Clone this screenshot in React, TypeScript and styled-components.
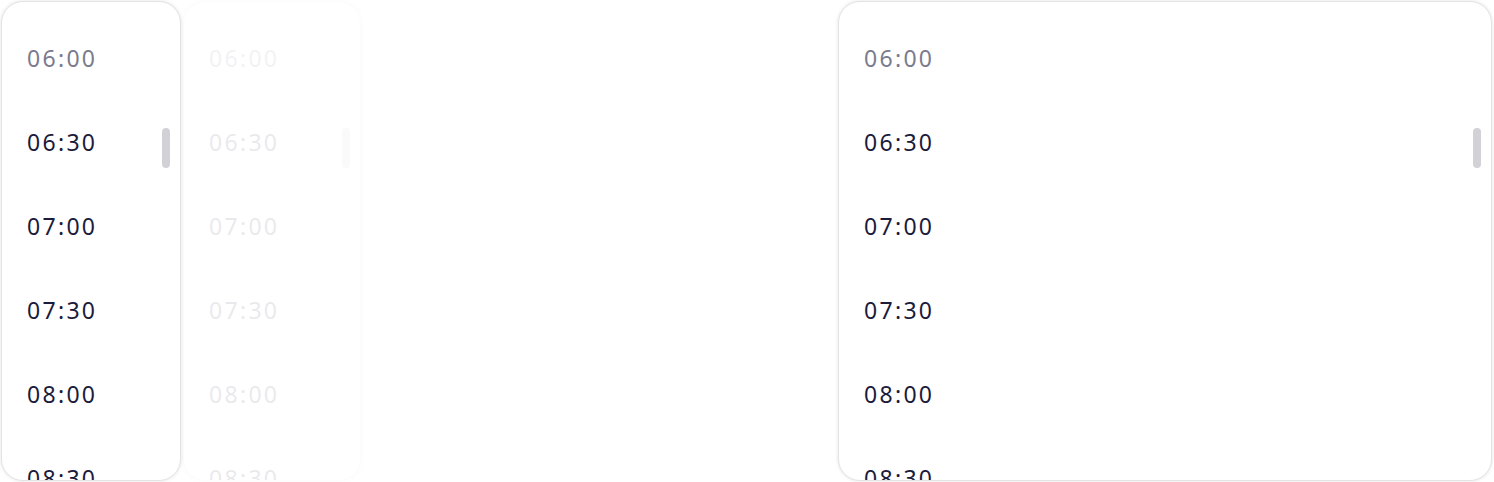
import React from "react";
import styled, { createGlobalStyle } from "styled-components";

const Global = createGlobalStyle`
  html, body { margin: 0; padding: 0; background: #ffffff; }
  body { font-family: "Noto Sans", "Liberation Sans", sans-serif; overflow: hidden; }
`;

const Page = styled.div`
  display: flex;
  align-items: flex-start;
  width: 1494px;
  height: 482px;
  padding: 1px 1px 0 1px;
  box-sizing: border-box;
  overflow: hidden;
`;

const Card = styled.div<{ $w: number; $faded?: boolean }>`
  position: relative;
  flex: none;
  width: ${(p) => p.$w}px;
  height: 480px;
  box-sizing: border-box;
  background: #ffffff;
  border: 1.5px solid #e4e4e7;
  border-radius: 22px;
  box-shadow: 0 0 3px 1px rgba(0, 0, 0, 0.07);
  overflow: hidden;
  opacity: ${(p) => (p.$faded ? 0.09 : 1)};
`;

const Spacer = styled.div<{ $w: number }>`
  flex: none;
  width: ${(p) => p.$w}px;
`;

const List = styled.ul`
  list-style: none;
  margin: 0;
  padding: 14px 0 0 25px;
  display: flex;
  flex-direction: column;
`;

const Option = styled.li<{ $muted?: boolean }>`
  height: 84px;
  display: flex;
  align-items: center;
  font-size: 23px;
  letter-spacing: 2.3px;
  color: ${(p) => (p.$muted ? "#7b7b8e" : "#1b1b3b")};
`;

const Thumb = styled.div`
  position: absolute;
  top: 126px;
  right: 10px;
  width: 8px;
  height: 40px;
  border-radius: 4px;
  background: #d1d1d6;
`;

const times = ["06:00", "06:30", "07:00", "07:30", "08:00", "08:30"];

function TimeList({ w, faded }: { w: number; faded?: boolean }) {
  return (
    <Card $w={w} $faded={faded}>
      <List>
        {times.map((t, i) => (
          <Option key={t} $muted={i === 0}>
            {t}
          </Option>
        ))}
      </List>
      <Thumb />
    </Card>
  );
}

export default function App() {
  return (
    <>
      <Global />
      <Page>
        <TimeList w={180} />
        <Spacer $w={2} />
        <TimeList w={178} faded />
        <Spacer $w={477} />
        <TimeList w={654} />
      </Page>
    </>
  );
}
